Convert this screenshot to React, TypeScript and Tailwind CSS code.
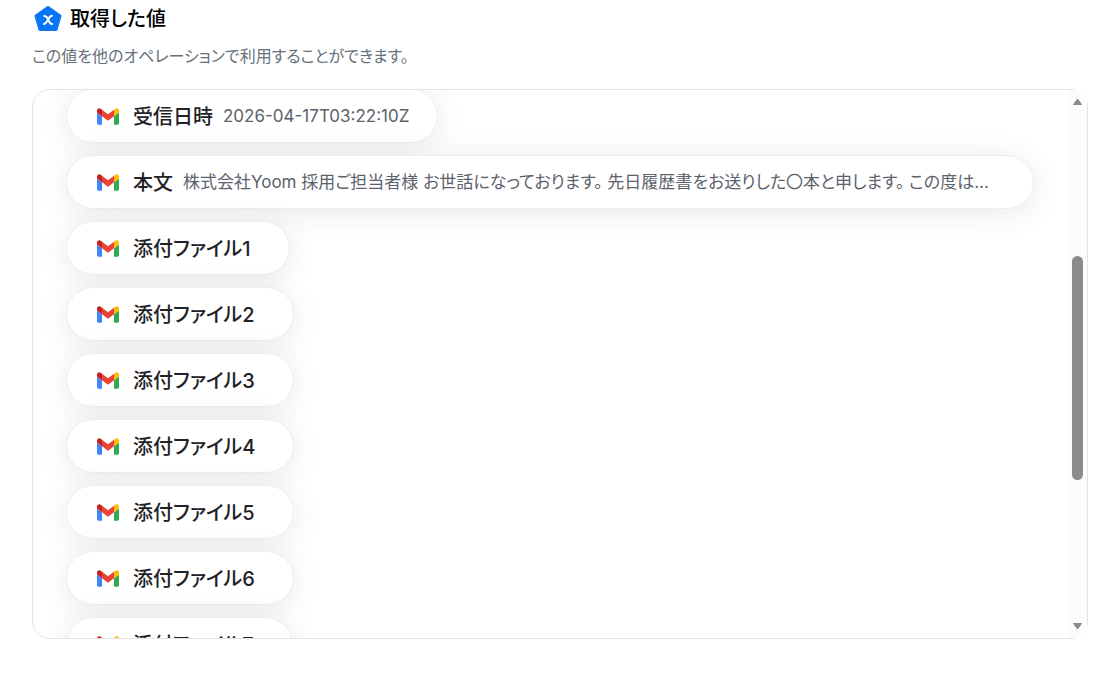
import React from 'react';

type OutputValue = { label: string; value?: string };

const OUTPUT_VALUES: OutputValue[] = [
  { label: '受信日時', value: '2026-04-17T03:22:10Z' },
  {
    label: '本文',
    value:
      '株式会社Yoom 採用ご担当者様 お世話になっております。 先日履歴書をお送りした〇本と申します。 この度は...',
  },
  { label: '添付ファイル1' },
  { label: '添付ファイル2' },
  { label: '添付ファイル3' },
  { label: '添付ファイル4' },
  { label: '添付ファイル5' },
  { label: '添付ファイル6' },
  { label: '添付ファイル7' },
];

function PentagonIcon() {
  return (
    <svg className="h-8 w-8 shrink-0" viewBox="0 0 32 32" aria-hidden="true">
      <path
        d="M16 5.500 28 14 24 27.500H8L4 14Z"
        fill="#0876f5"
        stroke="#0876f5"
        strokeWidth="3"
        strokeLinejoin="round"
      />
      <path
        d="M12.200 14c1.600 0 2.100.4 2.800 1.600l2.500 4.600c.6 1.200 1.200 1.700 2.700 1.700M20 13.800c-1.200 0-1.800.5-2.500 1.600l-3 4.600c-.7 1.200-1.300 1.900-2.500 1.900"
        fill="none"
        stroke="#fff"
        strokeWidth="2"
        strokeLinecap="round"
      />
    </svg>
  );
}

function GmailIcon() {
  return (
    <svg className="h-[17px] w-[22px] shrink-0" viewBox="52 42 88 66" aria-hidden="true">
      <path fill="#4285f4" d="M58 108h14V74L52 59v43c0 3.320 2.690 6 6 6" />
      <path fill="#34a853" d="M120 108h14c3.320 0 6-2.690 6-6V59l-20 15" />
      <path fill="#fbbc04" d="M120 48v26l20-15v-8c0-7.420-8.470-11.650-14.400-7.200" />
      <path fill="#ea4335" d="M72 74V48l24 18 24-18v26L96 92" />
      <path fill="#c5221f" d="M52 51v8l20 15V48l-5.600-4.200c-5.940-4.450-14.400-.22-14.400 7.200" />
    </svg>
  );
}

function ValuePill({ label, value }: OutputValue) {
  const isLong = (value?.length ?? 0) > 40;

  return (
    <li
      className={`flex h-[54px] max-w-full shrink-0 items-center rounded-full border border-[#e9edf2] bg-white pt-px pr-7 pl-[30px] shadow-[0_4px_32px_rgba(0,0,0,0.09)] ${
        isLong ? 'w-full' : ''
      }`}
    >
      <GmailIcon />
      <span className="ml-[14px] shrink-0 text-[20px] font-medium text-[#1f2328]">{label}</span>
      <span className="ml-[10px] truncate text-[17px] text-[#5b626b]">{value}</span>
    </li>
  );
}

function Scrollbar() {
  return (
    <div className="flex w-[19px] shrink-0 flex-col items-center bg-[#fcfcfc] py-2" aria-hidden="true">
      <svg className="h-[7px] w-[9px]" viewBox="0 0 9 7">
        <path d="M4.500 1 8.500 6.500H.5Z" fill="#8b8b8b" stroke="#8b8b8b" strokeLinejoin="round" />
      </svg>
      <div className="flex w-[11px] flex-1 flex-col py-3">
        <div className="grow-[139]" />
        <div className="grow-[224] rounded-full bg-[#8b8b8b]" />
        <div className="grow-[131]" />
      </div>
      <svg className="h-[7px] w-[9px]" viewBox="0 0 9 7">
        <path d="M4.500 6 .5.5H8.500Z" fill="#8b8b8b" stroke="#8b8b8b" strokeLinejoin="round" />
      </svg>
    </div>
  );
}

export default function App() {
  return (
    <main className="flex h-screen flex-col bg-white pr-5 pb-[43px] pl-8 font-['Inter','Noto_Sans_CJK_JP',sans-serif] [font-feature-settings:'palt']" lang="ja">
      {/* Heading */}
      <header className="h-[89px] shrink-0">
        <div className="flex items-start gap-[6px] pt-[2px]">
          <PentagonIcon />
          <h1 className="pt-px text-[20px] leading-8 font-medium text-black">取得した値</h1>
        </div>
        <p className="mt-[9px] text-[16px] leading-6 text-[#66707a]">
          この値を他のオペレーションで利用することができます。
        </p>
      </header>

      {/* Value list */}
      <section className="flex min-h-0 flex-1 rounded-[18px] border border-[#e4e4e4]">
        <div className="min-w-0 flex-1 overflow-hidden rounded-l-[17px]">
          <ul className="-mt-px flex flex-col items-start gap-3 pr-[34px] pl-[33px]">
            {OUTPUT_VALUES.map((item) => (
              <ValuePill key={item.label} {...item} />
            ))}
          </ul>
        </div>
        <Scrollbar />
      </section>
    </main>
  );
}
